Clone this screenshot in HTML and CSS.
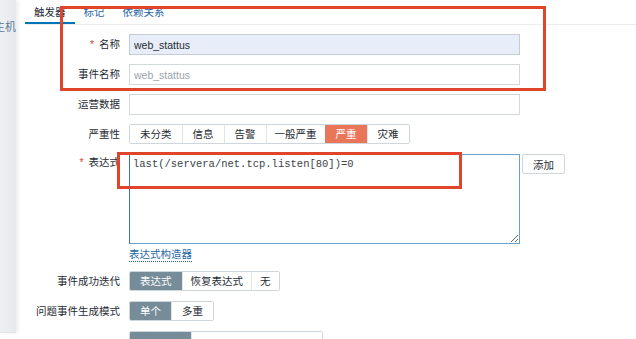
FILE: index.html
```html
<!DOCTYPE html>
<html lang="zh-CN">
<head>
  <meta charset="UTF-8">
  <title>触发器</title>
  <link rel="stylesheet" href="styles.css">
</head>
<body>
  <div class="page">
    <aside class="sidebar">
      <span class="side-link">主机</span>
    </aside>

    <main class="main">
      <nav class="tabs">
        <span class="tab active">触发器</span>
        <span class="tab">标记</span>
        <span class="tab">依赖关系</span>
      </nav>

      <form class="form" action="#">
        <label class="label"><span class="req">*</span> 名称</label>
        <div class="field">
          <input class="input filled" type="text" value="web_stattus">
        </div>

        <label class="label">事件名称</label>
        <div class="field">
          <input class="input" type="text" placeholder="web_stattus">
        </div>

        <label class="label">运营数据</label>
        <div class="field">
          <input class="input" type="text">
        </div>

        <label class="label">严重性</label>
        <div class="field">
          <div class="seg">
            <span class="seg-btn">未分类</span>
            <span class="seg-btn">信息</span>
            <span class="seg-btn">告警</span>
            <span class="seg-btn tight">一般严重</span>
            <span class="seg-btn sev-high">严重</span>
            <span class="seg-btn">灾难</span>
          </div>
        </div>

        <label class="label label-top"><span class="req">*</span> 表达式</label>
        <div class="field field-expr">
          <div class="expr-row">
            <textarea class="expr">last(/servera/net.tcp.listen[80])=0</textarea>
            <button class="btn" type="button">添加</button>
          </div>
          <a class="builder" href="#">表达式构造器</a>
        </div>

        <label class="label">事件成功迭代</label>
        <div class="field">
          <div class="seg">
            <span class="seg-btn on">表达式</span>
            <span class="seg-btn tight">恢复表达式</span>
            <span class="seg-btn tight">无</span>
          </div>
        </div>

        <label class="label">问题事件生成模式</label>
        <div class="field">
          <div class="seg">
            <span class="seg-btn on">单个</span>
            <span class="seg-btn">多重</span>
          </div>
        </div>

        <label class="label"></label>
        <div class="field">
          <div class="seg">
            <span class="seg-btn on wide">&nbsp;</span>
            <span class="seg-btn wide2">&nbsp;</span>
          </div>
        </div>
      </form>
    </main>

    <!-- annotation boxes drawn over the screenshot -->
    <div class="mark mark-name"></div>
    <div class="mark mark-expr"></div>
  </div>
</body>
</html>
```

FILE: styles.css
```css
body {
  margin: 0;
  background: #fff;
  font-family: "Liberation Sans", "Noto Sans CJK SC", sans-serif;
  font-size: 10.5px;
  color: #1f2c33;
  overflow: hidden;
}
.page {
  position: relative;
  display: flex;
  width: 636px;
  height: 339px;
  overflow: hidden;
}
.sidebar {
  flex: 0 0 16px;
  height: 332px;
  background: linear-gradient(to right, #eef0f2, #e6e9ec);
  box-shadow: 2px 0 4px rgba(0, 0, 0, 0.08);
  border-bottom: 1px solid #e3e6e9;
  overflow: hidden;
}
.side-link {
  display: flex;
  justify-content: flex-end;
  width: 16px;
  padding-top: 20px;
  white-space: nowrap;
  color: #5b7897;
  font-size: 11px;
  line-height: 14px;
}
.main {
  flex: 1;
  padding-left: 9px;
}
.tabs {
  display: flex;
  height: 24px;
  border-bottom: 1px solid #ebeef0;
}
.tab {
  padding: 5px 9px 0;
  line-height: 14px;
  color: #1f65a6;
}
.tab.active {
  color: #1f2c33;
  border-bottom: 2px solid #0275b8;
  height: 17px;
}
.form {
  display: grid;
  grid-template-columns: 95px 1fr;
  column-gap: 9px;
  row-gap: 9px;
  padding-top: 9px;
}
.label {
  text-align: right;
  line-height: 21px;
  white-space: nowrap;
}
.label-top {
  line-height: 16px;
}
.req {
  color: #d64541;
  margin-right: 2px;
}
.field {
  display: flex;
  flex-direction: column;
  align-items: flex-start;
}
.input {
  box-sizing: border-box;
  width: 391px;
  height: 21px;
  padding: 0 4px;
  border: 1px solid #d2d8dc;
  background: #fff;
  font-family: inherit;
  font-size: 10.5px;
  color: #1f2c33;
  outline: none;
}
.input::placeholder {
  color: #9aa4ab;
}
.input.filled {
  background: #e8eef9;
  border-color: #c3cdd8;
}
.seg {
  display: flex;
  border: 1px solid #cfd7dc;
  border-radius: 2px;
  overflow: hidden;
}
.seg-btn {
  height: 18px;
  line-height: 18px;
  padding: 0 10px;
  background: #fff;
  border-left: 1px solid #dfe4e7;
  color: #1f2c33;
}
.seg-btn:first-child {
  border-left: none;
}
.seg-btn.tight {
  padding: 0 8px;
}
.seg-btn.sev-high {
  background: #e97659;
  border-color: #e97659;
  color: #fff;
}
.seg-btn.on {
  background: #768d99;
  border-color: #768d99;
  color: #fff;
}
.seg-btn.wide {
  width: 41px;
}
.seg-btn.wide2 {
  width: 110px;
}
.expr-row {
  display: flex;
  align-items: flex-start;
  gap: 2px;
}
.expr {
  box-sizing: border-box;
  width: 391px;
  height: 90px;
  margin: 0;
  padding: 3px 3px;
  border: 1px solid #6aa0cc;
  border-left-color: #3b75a3;
  font-family: "Liberation Mono", monospace;
  font-size: 10.5px;
  line-height: 13px;
  color: #3a4349;
  resize: both;
  outline: none;
}
.btn {
  height: 20px;
  padding: 0 10px;
  background: #fff;
  border: 1px solid #cfd7dc;
  border-radius: 2px;
  font-family: inherit;
  font-size: 10.5px;
  color: #1f2c33;
}
.builder {
  margin-top: 3px;
  line-height: 14px;
  color: #1f65a6;
  text-decoration: none;
  border-bottom: 1px dotted #1f65a6;
}
.mark {
  position: absolute;
  box-sizing: border-box;
  border: 3px solid #e0452c;
}
.mark-name {
  left: 60px;
  top: 6px;
  width: 486px;
  height: 85px;
}
.mark-expr {
  left: 117px;
  top: 152px;
  width: 345px;
  height: 37px;
}
```
